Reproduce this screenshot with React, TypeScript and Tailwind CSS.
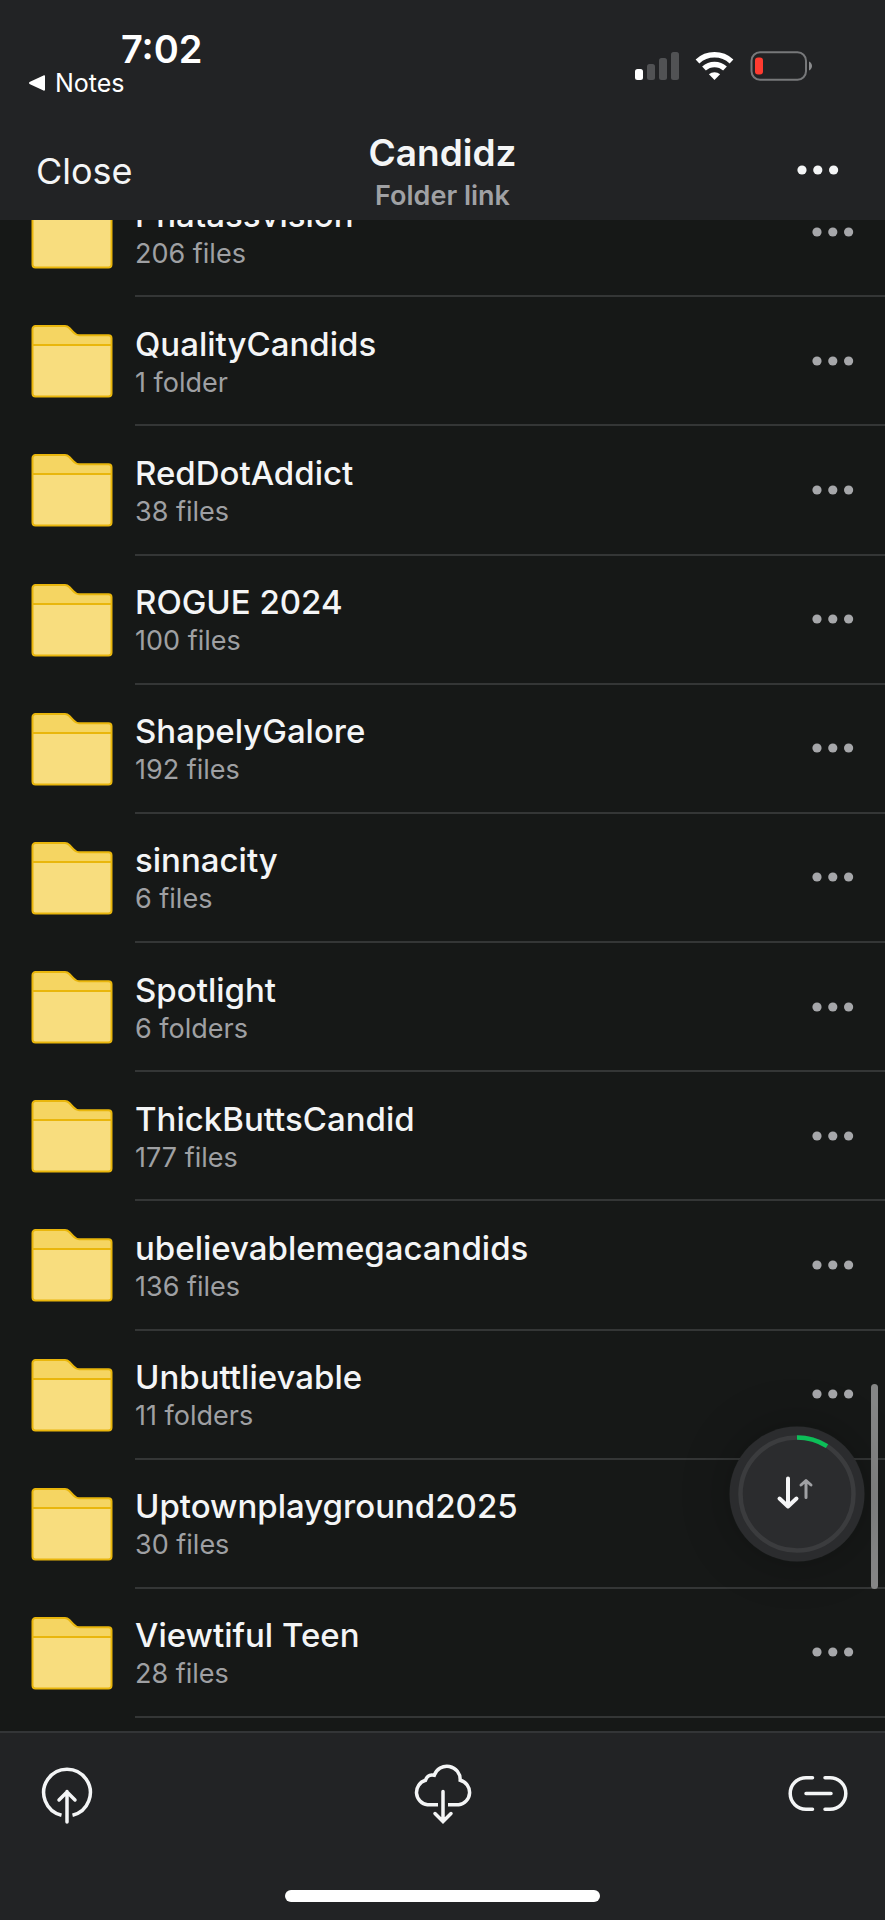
import type { ReactNode } from "react";

interface Folder {
  name: string;
  meta: string;
}

const FOLDERS: Folder[] = [
  { name: "Phatassvision", meta: "206 files" },
  { name: "QualityCandids", meta: "1 folder" },
  { name: "RedDotAddict", meta: "38 files" },
  { name: "ROGUE 2024", meta: "100 files" },
  { name: "ShapelyGalore", meta: "192 files" },
  { name: "sinnacity", meta: "6 files" },
  { name: "Spotlight", meta: "6 folders" },
  { name: "ThickButtsCandid", meta: "177 files" },
  { name: "ubelievablemegacandids", meta: "136 files" },
  { name: "Unbuttlievable", meta: "11 folders" },
  { name: "Uptownplayground2025", meta: "30 files" },
  { name: "Viewtiful Teen", meta: "28 files" },
];

function FolderIcon() {
  return (
    <svg aria-hidden className="shrink-0" height="73" viewBox="0 0 82 73" width="82">
      <path
        d="M1.500 20V4a3 3 0 0 1 3-3H34c2 0 3 .6 4.400 2l4 4.300c1.800 2 3.200 3 5.600 3h29.500a3 3 0 0 1 3 3V20z"
        fill="#f5d562"
      />
      <path d="M1.500 20h79v48.500a3 3 0 0 1-3 3h-73a3 3 0 0 1-3-3z" fill="#f8dd7e" />
      <path
        d="M1.500 20V4a3 3 0 0 1 3-3H34c2 0 3 .6 4.400 2l4 4.300c1.800 2 3.200 3 5.600 3h29.500a3 3 0 0 1 3 3v55.200a3 3 0 0 1-3 3h-73a3 3 0 0 1-3-3V20h79"
        fill="none"
        stroke="#e9b60c"
        strokeWidth="2"
      />
    </svg>
  );
}

function MoreIcon() {
  return (
    <svg aria-hidden fill="currentColor" height="10" viewBox="0 0 42 10" width="42">
      <circle cx="5" cy="5" r="4.600" />
      <circle cx="20.800" cy="5" r="4.600" />
      <circle cx="36.600" cy="5" r="4.600" />
    </svg>
  );
}

function StatusIcons() {
  return (
    <svg
      aria-label="Signal, Wi-Fi and battery"
      className="shrink-0"
      height="30"
      role="img"
      viewBox="0 0 178 30"
      width="178"
    >
      <rect fill="#fff" height="11" rx="2.500" width="8" x="0" y="18" />
      <rect fill="#515254" height="16" rx="2.500" width="8" x="12" y="13" />
      <rect fill="#515254" height="22" rx="2.500" width="8" x="24" y="7" />
      <rect fill="#515254" height="28" rx="2.500" width="8" x="36" y="1" />
      <g fill="none" stroke="#fff" strokeWidth="5.500">
        <path d="M62.500 10.500a25 25 0 0 1 34 0" />
        <path d="M69 17.500a15.500 15.500 0 0 1 21 0" />
      </g>
      <path d="M79.500 29l-5.600-5.700a8.500 8.500 0 0 1 11.200 0z" fill="#fff" />
      <rect
        fill="none"
        height="27.500"
        rx="8.500"
        stroke="#77787a"
        strokeWidth="2"
        width="54.500"
        x="116.500"
        y="1.200"
      />
      <rect fill="#ff3b30" height="17" rx="3" width="8" x="120" y="6.500" />
      <path d="M174 10.500c4 1.800 4 7.200 0 9z" fill="#8a8b8d" />
    </svg>
  );
}

function UploadIcon() {
  return (
    <svg
      aria-hidden
      fill="none"
      height="60"
      stroke="currentColor"
      strokeLinecap="round"
      strokeWidth="3.500"
      viewBox="0 0 60 60"
      width="60"
    >
      <path d="M24.500 51.200a23.300 23.300 0 1 1 11 0" strokeLinecap="butt" />
      <path d="M30 58V27.500M22 36l8-8 8 8" />
    </svg>
  );
}

function CloudDownloadIcon() {
  return (
    <svg
      aria-hidden
      fill="none"
      height="60"
      stroke="currentColor"
      strokeLinecap="round"
      strokeWidth="3.500"
      viewBox="0 0 60 60"
      width="60"
    >
      <path
        d="M25 40.700H14.500a12.500 12.500 0 0 1-2-24.400c1.300-4 4.500-6 8.800-5A13.300 13.300 0 0 1 47.200 16.200a12.500 12.500 0 0 1-1.500 24.500H35"
        strokeLinecap="butt"
        strokeLinejoin="miter"
      />
      <path d="M30 27.500V57M22 49.500l8 8 8-8" />
    </svg>
  );
}

function LinkIcon() {
  return (
    <svg
      aria-hidden
      fill="none"
      height="60"
      stroke="currentColor"
      strokeLinecap="round"
      strokeWidth="3.500"
      viewBox="0 0 60 60"
      width="60"
    >
      <path d="M24.500 13.700h-6.500a15.800 15.800 0 0 0 0 31.600h6.500M37 13.700h5a15.800 15.800 0 0 1 0 31.600h-5M18 29.500h25" />
    </svg>
  );
}

function TransferButton() {
  return (
    <button
      aria-label="Transfers"
      className="absolute right-[20px] bottom-[169px] z-10 rounded-full shadow-[0_0_48px_rgba(0,0,0,0.25)]"
      type="button"
    >
      <svg aria-hidden fill="none" height="136" viewBox="0 0 136 136" width="136">
        <circle cx="68" cy="68" fill="#2b2c2e" r="67.500" />
        <circle cx="68" cy="68" r="56.500" stroke="#3b3c3e" strokeWidth="4.500" />
        <path d="M68 11.500a56.500 56.500 0 0 1 30 8.600" stroke="#0cbf58" strokeWidth="4.500" />
        <g strokeLinecap="round" strokeLinejoin="round">
          <path d="M59 52.500v28M50.500 72.500l8.500 8 8.500-8" stroke="#f5f6f7" strokeWidth="4" />
          <path d="M77 71.500V55M72 59l5-4.500 5 4.500" stroke="#a0a1a4" strokeWidth="3" />
        </g>
      </svg>
    </button>
  );
}

function FolderRow({ folder }: { folder: Folder }) {
  return (
    <li className="flex min-h-[129px] flex-1 items-stretch gap-[22px] pl-[31px]">
      <div className="flex items-center">
        <FolderIcon />
      </div>
      <div className="flex min-w-0 flex-1 items-center justify-between border-b-2 border-[#343636] pr-[31px]">
        <button className="min-w-0 flex-1 pt-[2px] text-left" type="button">
          <span className="block truncate text-[33px] leading-[42px] font-medium text-[#f4f5f6]">
            {folder.name}
          </span>
          <span className="block text-[27px] leading-[36px] text-[#9fa0a3]">{folder.meta}</span>
        </button>
        <button aria-label={`More options for ${folder.name}`} className="py-4 text-[#a6a7aa]" type="button">
          <MoreIcon />
        </button>
      </div>
    </li>
  );
}

function ToolbarButton({ label, children }: { label: string; children: ReactNode }) {
  return (
    <button aria-label={label} type="button">
      {children}
    </button>
  );
}

export default function App() {
  return (
    <div className="flex min-h-screen flex-col bg-[#161817] font-['Inter','Liberation_Sans',sans-serif] text-[#f4f5f6]">
      <header className="z-10 bg-[#222325]">
        <div className="flex h-[110px] items-start justify-between pt-[28px] pr-[72px] pl-[29px]">
          <div>
            <div className="pl-[92px] text-[38px] leading-[42px] font-semibold text-white">7:02</div>
            <a className="flex items-center gap-[10px] text-[25px] leading-[26px] text-white" href="#notes">
              <svg aria-hidden fill="currentColor" height="16" viewBox="0 0 16 16" width="16">
                <path d="M14.500.5c1-.5 1.500 0 1.500 1v13c0 1-.5 1.500-1.500 1L1 9.200C-.300 8.500-.300 7.500 1 6.800z" />
              </svg>
              Notes
            </a>
          </div>
          <div className="pt-[23px]">
            <StatusIcons />
          </div>
        </div>
        <div className="grid h-[110px] grid-cols-3 items-start px-[36px] pt-5">
          <button className="justify-self-start pt-5 text-[36px] leading-[42px]" type="button">
            Close
          </button>
          <div className="text-center">
            <h1 className="text-[37px] leading-[46px] font-semibold">Candidz</h1>
            <p className="text-[27px] leading-[40px] font-semibold text-[#a0a1a4]">Folder link</p>
          </div>
          <button aria-label="More" className="justify-self-end pt-[35px] pr-[10px]" type="button">
            <MoreIcon />
          </button>
        </div>
      </header>

      <main className="relative flex flex-1 flex-col overflow-hidden">
        <ul className="-mt-[52px] flex flex-1 flex-col pb-[13px]">
          {FOLDERS.map((folder) => (
            <FolderRow folder={folder} key={folder.name} />
          ))}
        </ul>
        <TransferButton />
        <div className="absolute right-[7px] bottom-[142px] h-[205px] w-[7px] rounded-full bg-[#858686]" />
      </main>

      <footer className="border-t-2 border-[#333537] bg-[#222325]">
        <nav aria-label="Folder actions" className="flex items-start justify-between px-[37px] pt-[31px]">
          <ToolbarButton label="Upload">
            <UploadIcon />
          </ToolbarButton>
          <ToolbarButton label="Download">
            <CloudDownloadIcon />
          </ToolbarButton>
          <ToolbarButton label="Copy link">
            <LinkIcon />
          </ToolbarButton>
        </nav>
        <div className="mx-auto mt-[66px] mb-[18px] h-3 w-[315px] rounded-full bg-white" />
      </footer>
    </div>
  );
}
